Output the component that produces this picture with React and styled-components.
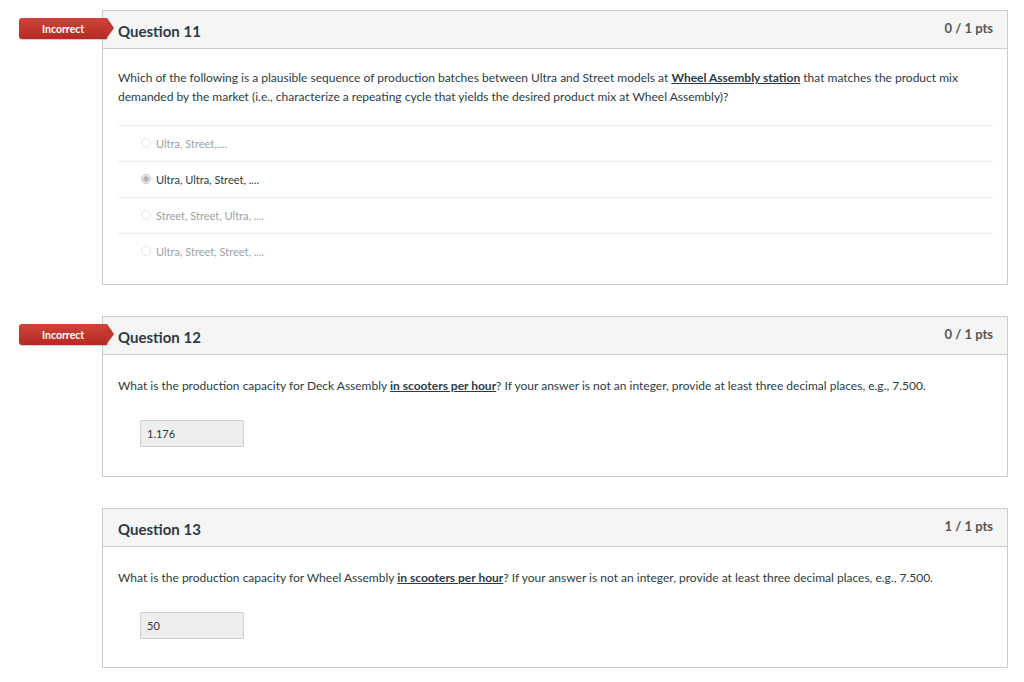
import React from "react";
import styled, { createGlobalStyle } from "styled-components";

const GlobalStyle = createGlobalStyle`
  body {
    margin: 0;
    background: #fff;
    font-family: Lato, "Open Sans", "Liberation Sans", sans-serif;
    color: #2d3b45;
  }
`;

const Page = styled.div`
  padding: 10px 0 0 102px;
  width: 906px;
  display: flex;
  flex-direction: column;
  gap: 31px;
`;

const Card = styled.div`
  position: relative;
  border: 1px solid #c7cdd1;
  background: #fff;
`;

const Header = styled.div`
  height: 37px;
  background: #f5f5f5;
  border-bottom: 1px solid #c7cdd1;
  display: flex;
  align-items: center;
  justify-content: space-between;
  padding: 0 14px 0 15px;
`;

const Title = styled.h3`
  margin: 2px 0 0;
  font-size: 15px;
  font-weight: 700;
  color: #2d3b45;
`;

const Points = styled.span`
  font-size: 13px;
  font-weight: 700;
  color: #555;
  margin-top: -4px;
`;

const Badge = styled.div`
  position: absolute;
  left: -84px;
  top: 7px;
  height: 21px;
  width: 88px;
  background: linear-gradient(#d0433a, #b52a23);
  border-radius: 3px 0 0 3px;
  color: #fff;
  font-size: 10.5px;
  font-weight: 700;
  display: flex;
  align-items: center;
  padding-left: 23px;
  box-sizing: border-box;
  box-shadow: 0 1px 1px rgba(0, 0, 0, 0.2);
  &::after {
    content: "";
    position: absolute;
    right: -7px;
    top: 0;
    border-top: 10.5px solid transparent;
    border-bottom: 10.5px solid transparent;
    border-left: 7px solid #c33730;
  }
`;

const Body = styled.div`
  padding: ${(p) => p.$top}px 14px ${(p) => p.$bottom}px 15px;
`;

const Text = styled.p`
  margin: 0;
  font-size: 12px;
  line-height: 19px;
  color: #2d3b45;
  b {
    font-weight: 700;
    text-decoration: underline;
  }
`;

const Answers = styled.div`
  margin-top: 19px;
`;

const AnswerRow = styled.div`
  height: 35px;
  border-top: 1px solid #ebeef0;
  display: flex;
  align-items: center;
  padding-left: 23px;
  gap: 5px;
  font-size: 11px;
  color: ${(p) => (p.$selected ? "#2d3b45" : "#9aa1a6")};
`;

const Radio = styled.span`
  width: 8px;
  height: 8px;
  border-radius: 50%;
  border: 1px solid ${(p) => (p.$selected ? "#c9c9c9" : "#e3e5e6")};
  background: ${(p) =>
    p.$selected ? "radial-gradient(circle, #b5b5b5 0 2.5px, #e8e8e8 3px)" : "#fff"};
  margin-top: -1px;
`;

const Input = styled.div`
  margin: 25px 0 0 22px;
  width: 96px;
  height: 25px;
  background: #eee;
  border: 1px solid #ccc;
  border-radius: 2px;
  font-size: 11px;
  color: #333;
  display: flex;
  align-items: center;
  padding-left: 6px;
  box-sizing: content-box;
`;

function QuestionCard({ name, pts, incorrect, children, top, bottom }) {
  return (
    <Card>
      {incorrect && <Badge>Incorrect</Badge>}
      <Header>
        <Title>{name}</Title>
        <Points>{pts}</Points>
      </Header>
      <Body $top={top} $bottom={bottom}>
        {children}
      </Body>
    </Card>
  );
}

const answers = [
  "Ultra, Street,....",
  "Ultra, Ultra, Street, ....",
  "Street, Street, Ultra, ....",
  "Ultra, Street, Street, ....",
];

export default function App() {
  return (
    <>
      <GlobalStyle />
      <Page>
        <QuestionCard name="Question 11" pts="0 / 1 pts" incorrect top={19} bottom={15}>
          <Text>
            Which of the following is a plausible sequence of production batches between Ultra and
            Street models at <b>Wheel Assembly station</b> that matches the product mix demanded by
            the market (i.e., characterize a repeating cycle that yields the desired product mix at
            Wheel Assembly)?
          </Text>
          <Answers>
            {answers.map((a, i) => (
              <AnswerRow key={a} $selected={i === 1}>
                <Radio $selected={i === 1} />
                {a}
              </AnswerRow>
            ))}
          </Answers>
        </QuestionCard>
        <QuestionCard name="Question 12" pts="0 / 1 pts" incorrect top={21} bottom={29}>
          <Text>
            What is the production capacity for Deck Assembly <b>in scooters per hour</b>? If your
            answer is not an integer, provide at least three decimal places, e.g., 7.500.
          </Text>
          <Input>1.176</Input>
        </QuestionCard>
        <QuestionCard name="Question 13" pts="1 / 1 pts" top={21} bottom={28}>
          <Text>
            What is the production capacity for Wheel Assembly <b>in scooters per hour</b>? If your
            answer is not an integer, provide at least three decimal places, e.g., 7.500.
          </Text>
          <Input>50</Input>
        </QuestionCard>
      </Page>
    </>
  );
}
